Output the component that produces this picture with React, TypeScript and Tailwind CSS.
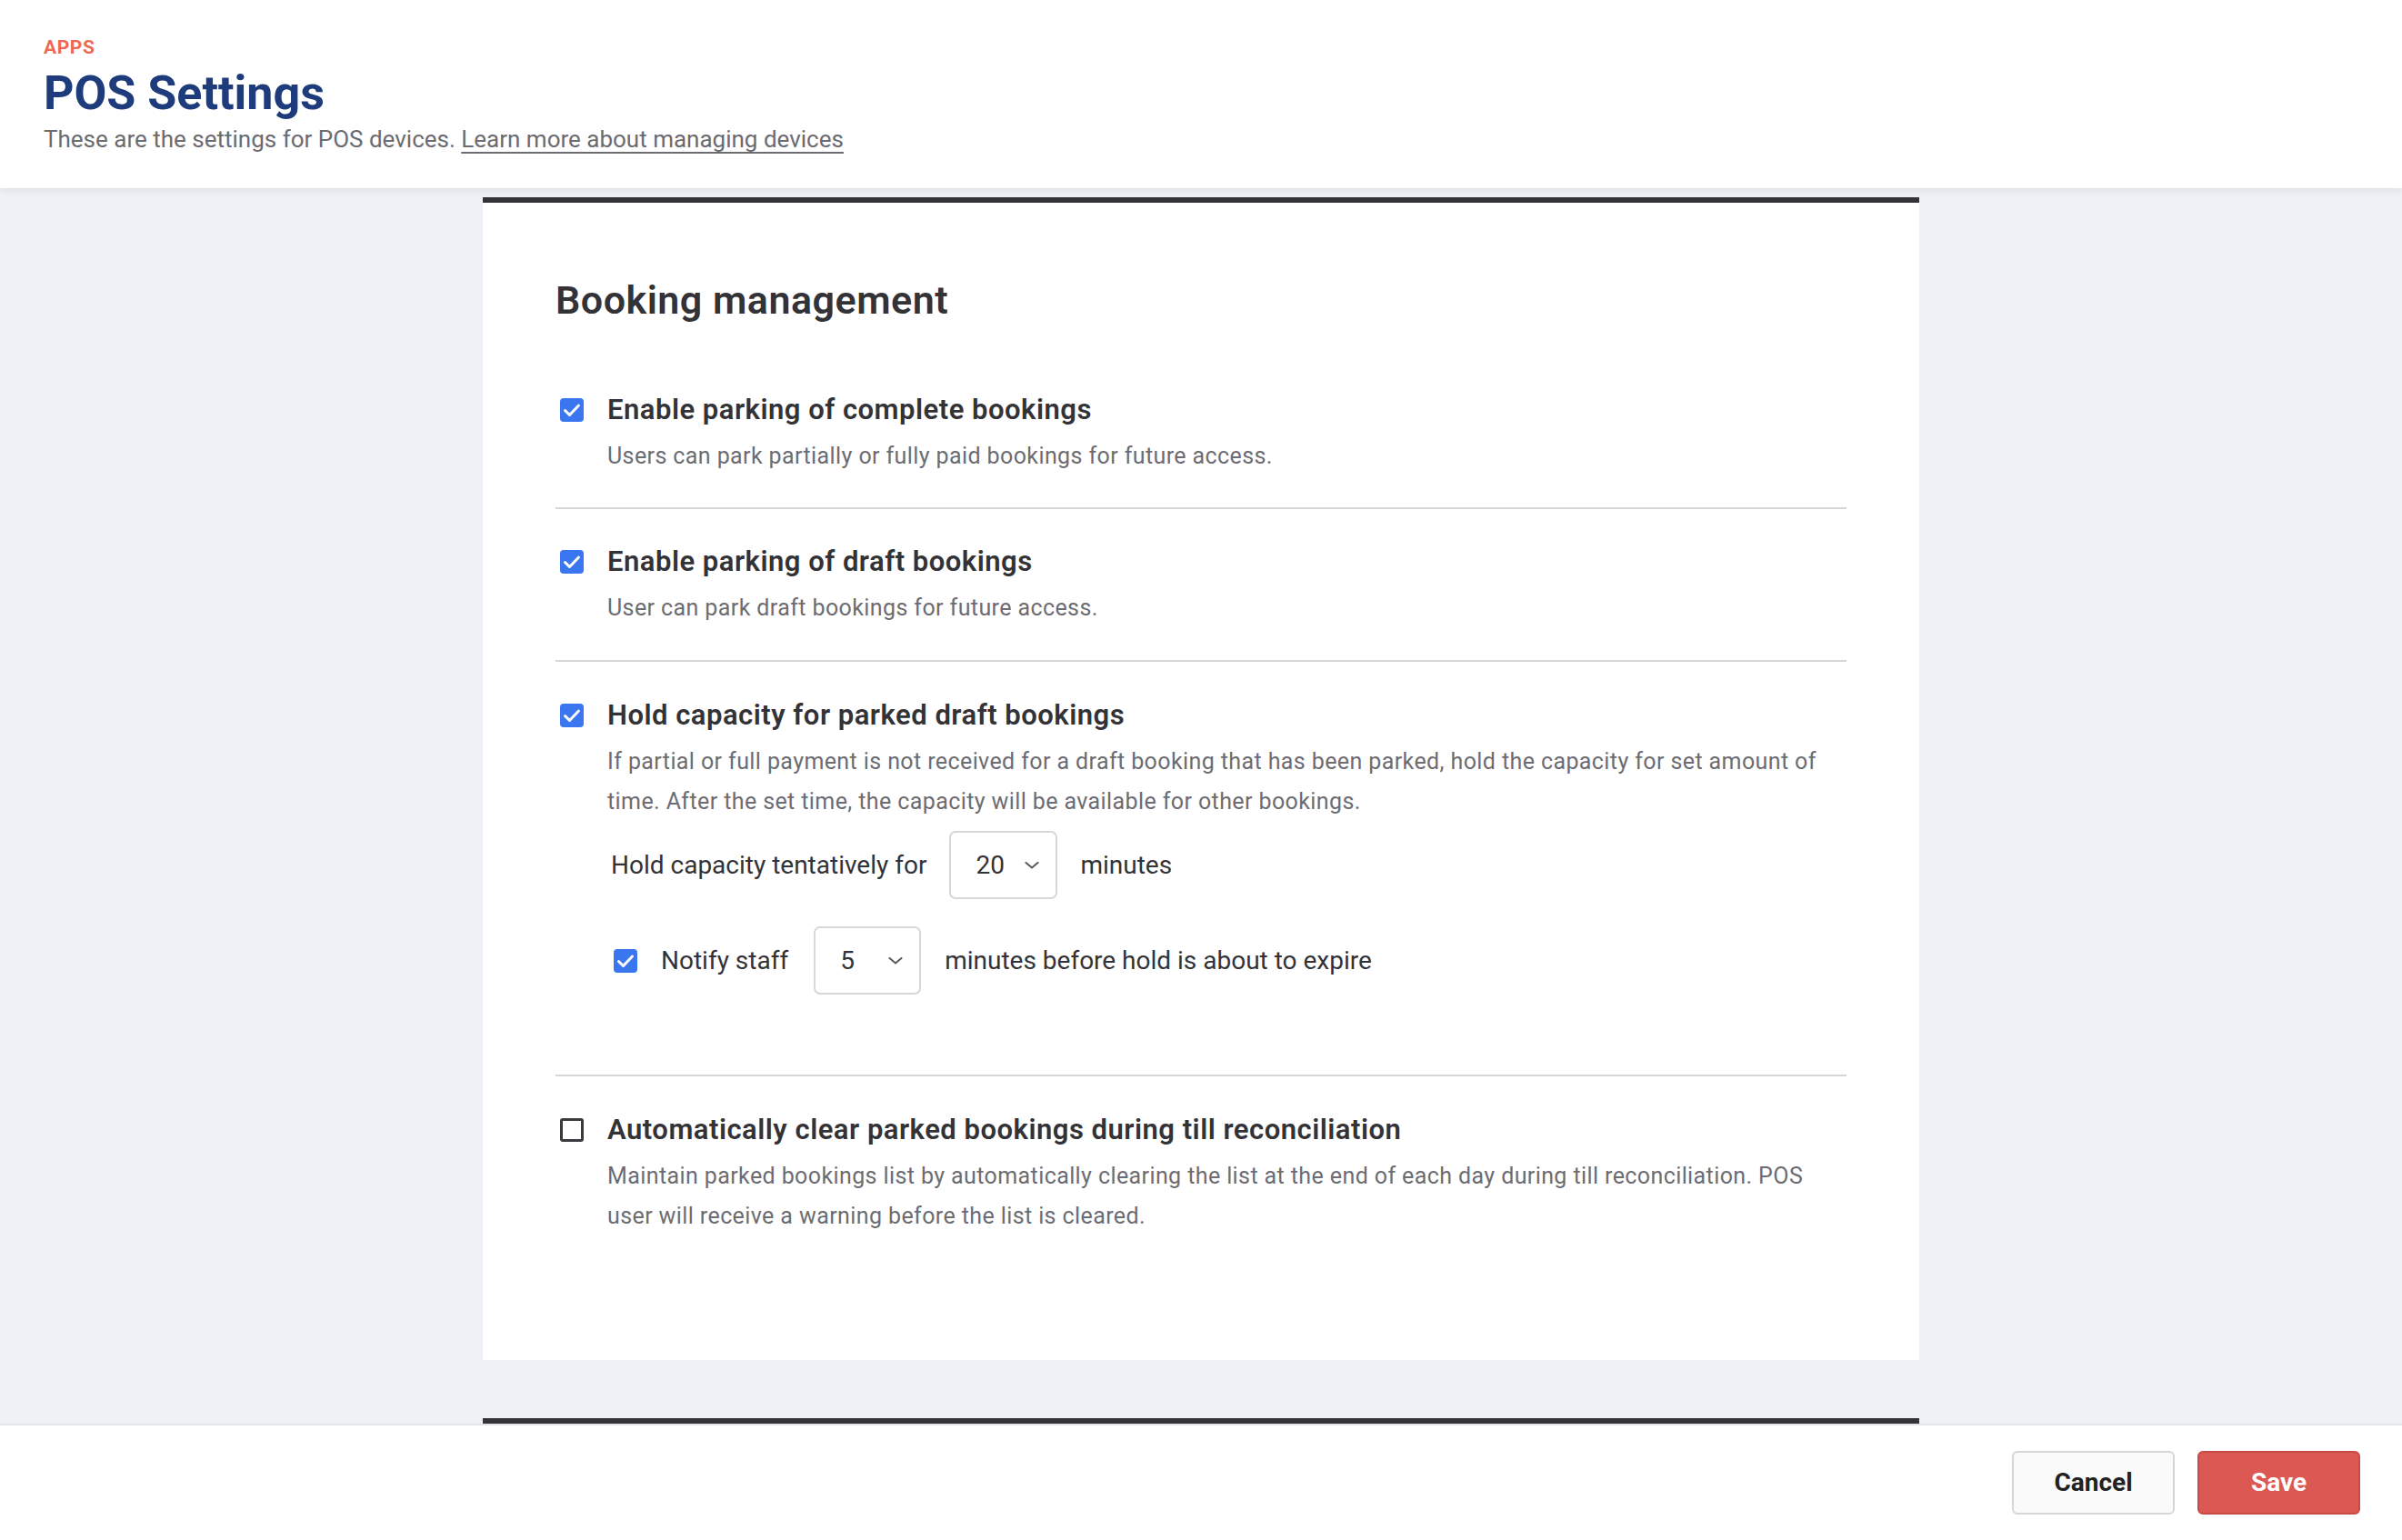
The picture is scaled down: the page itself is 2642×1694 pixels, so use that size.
import {useState} from "react"

function Checkbox({checked, onChange}: {checked: boolean; onChange: () => void}) {
  return (
    <button
      type="button"
      onClick={onChange}
      className={
        checked
          ? "flex h-[26px] w-[26px] shrink-0 items-center justify-center rounded-[4px] bg-[#3a76f0]"
          : "flex h-[26px] w-[26px] shrink-0 items-center justify-center rounded-[3px] border-[3px] border-[#3a3a3f] bg-white"
      }>
      {checked && (
        <svg width="26" height="26" viewBox="0 0 26 26" fill="none">
          <path
            d="M5.5 13.5 L10.5 18.5 L20.5 8"
            stroke="white"
            strokeWidth="3"
            strokeLinecap="round"
            strokeLinejoin="round"
          />
        </svg>
      )}
    </button>
  )
}

function Select({value, width}: {value: string; width: string}) {
  return (
    <div
      className={`flex h-[75px] ${width} shrink-0 items-center justify-between rounded-[7px] border-2 border-[#d7d7d9] bg-white pl-[27px] pr-[18px] text-[28px] text-[#333337]`}>
      <span>{value}</span>
      <svg width="16" height="8" viewBox="0 0 16 8" fill="none">
        <path d="M1.5 1 L8 6.5 L14.5 1" stroke="#58585d" strokeWidth="2" strokeLinecap="round" />
      </svg>
    </div>
  )
}

function Setting({
  title,
  description,
  checked,
  onToggle,
  children,
}: {
  title: string
  description: string
  checked: boolean
  onToggle: () => void
  children?: React.ReactNode
}) {
  return (
    <div>
      <div className="flex items-center gap-[26px] pl-[5px]">
        <Checkbox checked={checked} onChange={onToggle} />
        <div className="text-[31px] font-semibold leading-[40px] tracking-[0.5px] text-[#333337]">{title}</div>
      </div>
      <p className="mt-[9px] pl-[57px] text-[25px] leading-[44px] tracking-[0.4px] text-[#6c6c72]">{description}</p>
      {children}
    </div>
  )
}

export default function App() {
  const [complete, setComplete] = useState(true)
  const [draft, setDraft] = useState(true)
  const [hold, setHold] = useState(true)
  const [notify, setNotify] = useState(true)
  const [autoClear, setAutoClear] = useState(false)

  return (
    <div className="flex h-screen flex-col overflow-hidden bg-[#f0f1f6] font-[family-name:Roboto,sans-serif]">
      {/* Header */}
      <header className="relative z-10 h-[207px] shrink-0 bg-white px-[48px] pt-[40px] shadow-[0_3px_8px_rgba(0,0,0,0.07)]">
        <div className="text-[21px] font-bold leading-[24px] tracking-[0.6px] text-[#ec6a54]">APPS</div>
        <h1 className="mt-[9px] text-[52px] font-bold leading-[60px] text-[#1e3b7c]">POS Settings</h1>
        <p className="mt-[2px] text-[26px] leading-[36px] text-[#6b6b72]">
          These are the settings for POS devices.{" "}
          <a href="#" className="underline decoration-[2px] underline-offset-[5px]">
            Learn more about managing devices
          </a>
        </p>
      </header>

      {/* Main */}
      <main className="min-h-0 flex-1 overflow-hidden pt-[10px]">
        <section className="mx-auto w-[1580px] border-t-[6px] border-[#333338] bg-white px-[80px] pb-[136px] pt-[83px]">
          <h2 className="text-[43px] font-semibold leading-[48px] tracking-[0.5px] text-[#333337]">
            Booking management
          </h2>

          <div className="mt-[77px]">
            <div className="pb-[34px]">
              <Setting
                title="Enable parking of complete bookings"
                description="Users can park partially or fully paid bookings for future access."
                checked={complete}
                onToggle={() => setComplete(!complete)}
              />
            </div>
            <div className="h-[2px] bg-[#d6d6d8]" />

            <div className="pb-[35px] pt-[38px]">
              <Setting
                title="Enable parking of draft bookings"
                description="User can park draft bookings for future access."
                checked={draft}
                onToggle={() => setDraft(!draft)}
              />
            </div>
            <div className="h-[2px] bg-[#d6d6d8]" />

            <div className="pb-[88px] pt-[39px]">
              <Setting
                title="Hold capacity for parked draft bookings"
                description="If partial or full payment is not received for a draft booking that has been parked, hold the capacity for set amount of time. After the set time, the capacity will be available for other bookings."
                checked={hold}
                onToggle={() => setHold(!hold)}>
                <div className="mt-[10px] flex items-center gap-[25px] pl-[61px] text-[28px] text-[#333337]">
                  <span>Hold capacity tentatively for</span>
                  <Select value="20" width="w-[119px]" />
                  <span>minutes</span>
                </div>
                <div className="mt-[30px] flex items-center pl-[64px] text-[28px] text-[#333337]">
                  <Checkbox checked={notify} onChange={() => setNotify(!notify)} />
                  <span className="ml-[26px]">Notify staff</span>
                  <div className="ml-[28px]">
                    <Select value="5" width="w-[118px]" />
                  </div>
                  <span className="ml-[26px]">minutes before hold is about to expire</span>
                </div>
              </Setting>
            </div>
            <div className="h-[2px] bg-[#d6d6d8]" />

            <div className="pt-[39px]">
              <Setting
                title="Automatically clear parked bookings during till reconciliation"
                description="Maintain parked bookings list by automatically clearing the list at the end of each day during till reconciliation. POS user will receive a warning before the list is cleared."
                checked={autoClear}
                onToggle={() => setAutoClear(!autoClear)}
              />
            </div>
          </div>
        </section>

        <section className="mx-auto mt-[64px] h-[300px] w-[1580px] border-t-[6px] border-[#333338] bg-white" />
      </main>

      {/* Footer */}
      <footer className="flex h-[128px] shrink-0 items-center justify-end gap-[25px] border-t-2 border-[#e4e4e6] bg-white pr-[46px]">
        <button className="h-[70px] w-[179px] rounded-[6px] border-2 border-[#d6d6d8] bg-[#fafafa] text-[28px] font-bold text-[#222225]">
          Cancel
        </button>
        <button className="h-[70px] w-[179px] rounded-[6px] border-2 border-[#c84b47] bg-[#db5853] text-[28px] font-bold text-white">
          Save
        </button>
      </footer>
    </div>
  )
}
